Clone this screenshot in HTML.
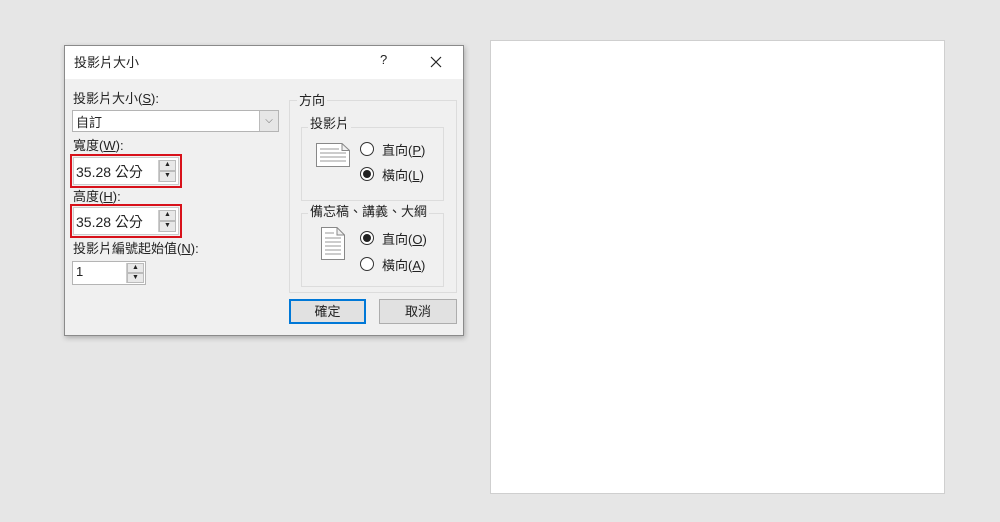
<!DOCTYPE html><html><head><meta charset="utf-8"><style>
*{box-sizing:border-box;margin:0;padding:0}
body{width:1000px;height:522px;background:#e6e6e6;position:relative;overflow:hidden;font-family:"Liberation Sans","Noto Sans CJK TC",sans-serif;font-size:13px;color:#222}
.a{position:absolute}
.slide{left:490px;top:40px;width:455px;height:454px;background:#fff;border:1px solid #cfcfcf}
.dlg{left:64px;top:45px;width:400px;height:291px;background:#f0f0f0;border:1px solid #8a8a8a;box-shadow:1px 2px 5px rgba(0,0,0,.25)}
.tb{left:0;top:0;width:398px;height:33px;background:#fff}
.in{background:#fff;border:1px solid #b4b4b4}
.red{border:2px solid #d8111a}
.spin{width:18px;border-left:1px solid #ccc;background:#f0f0f0}
.spin div{height:50%;border:1px solid #bbb;background:#e8e8e8;font-size:7px;text-align:center;line-height:8px}
.grp{border:1px solid #dcdcdc}
.rad{width:14px;height:14px;border:1px solid #333;border-radius:50%;background:#fff}
.rad.on::after{content:"";position:absolute;left:2px;top:2px;width:8px;height:8px;border-radius:50%;background:#222}
.btn{height:25px;background:#e1e1e1;border:1px solid #adadad;text-align:center;line-height:23px}
u{text-decoration:underline}
</style></head><body>
<div class="a slide"></div>
<div class="a dlg">
<div class="a tb"></div>
<div class="a" style="left:9px;top:6px">投影片大小</div>
<div class="a" style="left:315px;top:6px">?</div>
<svg class="a" style="left:365px;top:10px" width="12" height="12"><path d="M1 1L11 11M11 1L1 11" stroke="#222" stroke-width="1.2"/></svg>

<div class="a" style="left:8px;top:42px">投影片大小(<u>S</u>):</div>
<div class="a in" style="left:7px;top:64px;width:207px;height:22px"><span class="a" style="left:3px;top:1px">自訂</span>
<div class="a" style="right:0;top:0;width:19px;height:20px;background:#e6e6e6;border-left:1px solid #bbb;font-size:10px;text-align:center;line-height:20px;color:#666">⌵</div></div>

<div class="a" style="left:8px;top:89px">寬度(<u>W</u>):</div>
<div class="a red" style="left:5px;top:108px;width:112px;height:34px"></div>
<div class="a in" style="left:8px;top:111px;width:106px;height:28px;border-color:#ccc"><span class="a" style="left:2px;top:4px;font-size:14px">35.28 公分</span>
<div class="a spin" style="right:2px;top:2px;height:22px"><div>▲</div><div>▼</div></div></div>

<div class="a" style="left:8px;top:140px">高度(<u>H</u>):</div>
<div class="a red" style="left:5px;top:158px;width:112px;height:34px"></div>
<div class="a in" style="left:8px;top:161px;width:106px;height:28px;border-color:#ccc"><span class="a" style="left:2px;top:4px;font-size:14px">35.28 公分</span>
<div class="a spin" style="right:2px;top:2px;height:22px"><div>▲</div><div>▼</div></div></div>

<div class="a" style="left:8px;top:192px">投影片編號起始值(<u>N</u>):</div>
<div class="a in" style="left:7px;top:215px;width:74px;height:24px"><span class="a" style="left:3px;top:2px">1</span>
<div class="a spin" style="right:1px;top:1px;height:20px"><div>▲</div><div>▼</div></div></div>

<div class="a grp" style="left:224px;top:54px;width:168px;height:193px"></div>
<div class="a" style="left:232px;top:44px;background:#f0f0f0;padding:0 2px">方向</div>
<div class="a grp" style="left:236px;top:81px;width:143px;height:74px"></div>
<div class="a" style="left:243px;top:67px;background:#f0f0f0;padding:0 2px">投影片</div>
<svg class="a" style="left:251px;top:97px" width="34" height="24"><path d="M.5 .5H26L33.5 7.5V23.5H.5Z M26 .5V7.5H33.5" fill="#fff" stroke="#888"/><path d="M4 6H23M4 10H30M4 14H30M4 18H30" stroke="#999"/></svg>
<div class="a rad" style="left:295px;top:96px"></div><div class="a" style="left:317px;top:94px">直向(<u>P</u>)</div>
<div class="a rad on" style="left:295px;top:121px"></div><div class="a" style="left:317px;top:119px">橫向(<u>L</u>)</div>

<div class="a grp" style="left:236px;top:167px;width:143px;height:74px"></div>
<div class="a" style="left:243px;top:155px;background:#f0f0f0;padding:0 2px">備忘稿、講義、大綱</div>
<svg class="a" style="left:256px;top:181px" width="24" height="33"><path d="M.5 .5H16L23.5 8V32.5H.5Z M16 .5V8H23.5" fill="#fff" stroke="#888"/><path d="M4 6H13M4 11H20M4 15H20M4 19H20M4 23H20M4 27H20" stroke="#999"/></svg>
<div class="a rad on" style="left:295px;top:185px"></div><div class="a" style="left:317px;top:183px">直向(<u>O</u>)</div>
<div class="a rad" style="left:295px;top:211px"></div><div class="a" style="left:317px;top:209px">橫向(<u>A</u>)</div>

<div class="a btn" style="left:224px;top:253px;width:77px;border:2px solid #0078d7;line-height:21px">確定</div>
<div class="a btn" style="left:230px;top:253px;width:0;border:0"></div>
<div class="a btn" style="left:314px;top:253px;width:78px">取消</div>
</div>
</body></html>
